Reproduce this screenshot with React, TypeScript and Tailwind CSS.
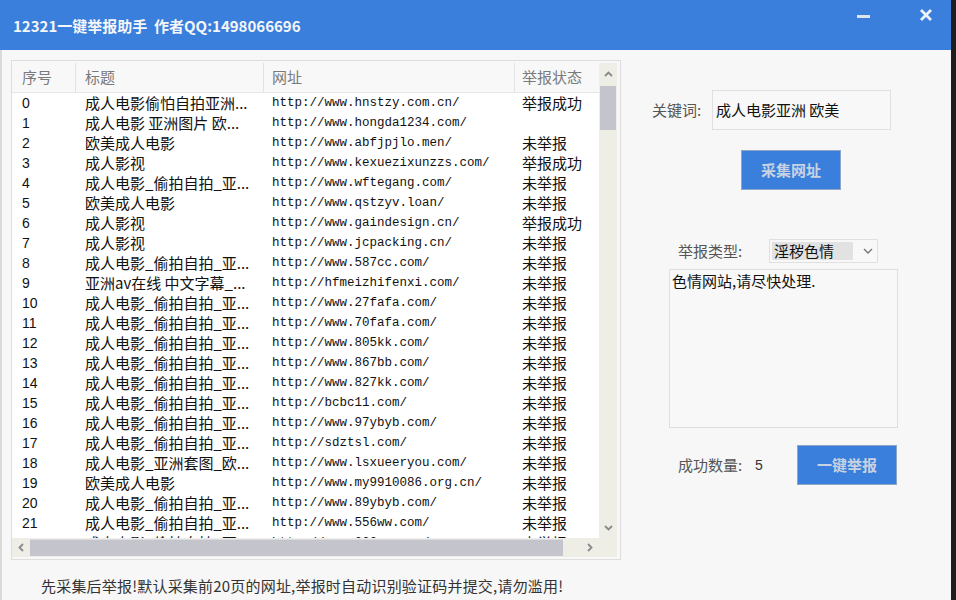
import React from "react";

const CJK = { fontFamily: '"Noto Sans CJK SC", "Noto Sans", sans-serif' };
const MONO = { fontFamily: '"Liberation Mono", "DejaVu Sans Mono", monospace' };
const SANS = { fontFamily: '"Liberation Sans", Arial, sans-serif' };

const rows: [string, string, string, string][] = [
  ["0", "成人电影偷怕自拍亚洲...", "http://www.hnstzy.com.cn/", "举报成功"],
  ["1", "成人电影 亚洲图片 欧...", "http://www.hongda1234.com/", ""],
  ["2", "欧美成人电影", "http://www.abfjpjlo.men/", "未举报"],
  ["3", "成人影视", "http://www.kexuezixunzzs.com/", "举报成功"],
  ["4", "成人电影_偷拍自拍_亚...", "http://www.wftegang.com/", "未举报"],
  ["5", "欧美成人电影", "http://www.qstzyv.loan/", "未举报"],
  ["6", "成人影视", "http://www.gaindesign.cn/", "举报成功"],
  ["7", "成人影视", "http://www.jcpacking.cn/", "未举报"],
  ["8", "成人电影_偷拍自拍_亚...", "http://www.587cc.com/", "未举报"],
  ["9", "亚洲av在线 中文字幕_...", "http://hfmeizhifenxi.com/", "未举报"],
  ["10", "成人电影_偷拍自拍_亚...", "http://www.27fafa.com/", "未举报"],
  ["11", "成人电影_偷拍自拍_亚...", "http://www.70fafa.com/", "未举报"],
  ["12", "成人电影_偷拍自拍_亚...", "http://www.805kk.com/", "未举报"],
  ["13", "成人电影_偷拍自拍_亚...", "http://www.867bb.com/", "未举报"],
  ["14", "成人电影_偷拍自拍_亚...", "http://www.827kk.com/", "未举报"],
  ["15", "成人电影_偷拍自拍_亚...", "http://bcbc11.com/", "未举报"],
  ["16", "成人电影_偷拍自拍_亚...", "http://www.97ybyb.com/", "未举报"],
  ["17", "成人电影_偷拍自拍_亚...", "http://sdztsl.com/", "未举报"],
  ["18", "成人电影_亚洲套图_欧...", "http://www.lsxueeryou.com/", "未举报"],
  ["19", "欧美成人电影", "http://www.my9910086.org.cn/", "未举报"],
  ["20", "成人电影_偷拍自拍_亚...", "http://www.89ybyb.com/", "未举报"],
  ["21", "成人电影_偷拍自拍_亚...", "http://www.556ww.com/", "未举报"],
  ["22", "成人电影_偷拍自拍_亚...", "http://www.666ww.com/", "未举报"],
];

function Chevron({ dir }: { dir: "up" | "down" | "left" | "right" }) {
  const d = {
    up: "M2 7 L5.5 3.5 L9 7",
    down: "M2 4 L5.5 7.5 L9 4",
    left: "M7 2 L3.5 5.5 L7 9",
    right: "M4 2 L7.5 5.5 L4 9",
  }[dir];
  return (
    <svg width="11" height="11" viewBox="0 0 11 11">
      <path d={d} fill="none" stroke="#8a8a8a" strokeWidth="1.8" />
    </svg>
  );
}

export default function App() {
  return (
    <div className="flex h-[600px] w-[956px] overflow-hidden bg-[#1e1e1e]">
      <div className="flex w-[951px] flex-col bg-[#f7f7f7]">
        {/* Title bar */}
        <div className="flex h-[50px] items-center bg-[#3a7fdb] pl-[13px]">
          <span
            className="text-[15px] font-bold leading-none text-[#f4f6fa]"
            style={CJK}
          >
            12321一键举报助手&nbsp;&nbsp;作者QQ:1498066696
          </span>
          <div className="ml-auto flex h-full items-start pt-[6px]">
            <div className="mr-[49px] mt-[9px] h-[3px] w-[13px] bg-[#dfe6f0]" />
            <svg width="14" height="14" viewBox="0 0 14 14" className="mr-[18px] mt-[2px]">
              <path d="M2 2 L12 12 M12 2 L2 12" stroke="#eef2f8" strokeWidth="2.8" />
            </svg>
          </div>
        </div>

        {/* Body */}
        <div className="flex flex-1 border-l-[2px] border-[#dadada]">
          {/* Left column */}
          <div className="flex flex-col pl-[9px] pt-[10px]">
            <div className="flex h-[500px] w-[610px] flex-col border border-[#dedede] bg-[#f8f8f8] pl-0 pr-[3px] pt-[2px]">
              <div className="flex h-[475px]">
                {/* table */}
                <div className="flex w-[587px] flex-col overflow-hidden bg-white">
                  <div
                    className="grid h-[30px] shrink-0 grid-cols-[64px_188px_251px_84px] border-b border-[#e6e6e6] bg-[#f8f8f8] text-[15px] text-[#7a7a7a]"
                    style={CJK}
                  >
                    <div className="flex items-center border-r border-[#e2e2e2] pl-[10px]">序号</div>
                    <div className="flex items-center border-r border-[#e2e2e2] pl-[9px]">标题</div>
                    <div className="flex items-center border-r border-[#e2e2e2] pl-[8px]">网址</div>
                    <div className="flex items-center pl-[7px]">举报状态</div>
                  </div>
                  <div className="flex-1 overflow-hidden">
                    {rows.map((r) => (
                      <div
                        key={r[0]}
                        className="grid h-[20px] grid-cols-[64px_188px_251px_84px] items-center text-[#111]"
                      >
                        <div className="pl-[10px] text-[14px] leading-[20px]" style={SANS}>
                          {r[0]}
                        </div>
                        <div
                          className="overflow-hidden whitespace-nowrap pl-[9px] text-[15px] leading-[20px]"
                          style={CJK}
                        >
                          {r[1]}
                        </div>
                        <div
                          className="overflow-hidden whitespace-nowrap pl-[8px] text-[12.5px] leading-[20px]"
                          style={MONO}
                        >
                          {r[2]}
                        </div>
                        <div
                          className="whitespace-nowrap pl-[7px] text-[15px] leading-[20px]"
                          style={CJK}
                        >
                          {r[3]}
                        </div>
                      </div>
                    ))}
                  </div>
                </div>
                {/* vertical scrollbar */}
                <div className="flex w-[18px] flex-col bg-[#eeeee6]">
                  <div className="flex h-[23px] items-center justify-center">
                    <Chevron dir="up" />
                  </div>
                  <div className="mx-[1px] h-[44px] bg-[#c4c4cc]" />
                  <div className="flex-1" />
                  <div className="flex h-[22px] items-center justify-center">
                    <Chevron dir="down" />
                  </div>
                </div>
              </div>
              {/* horizontal scrollbar */}
              <div className="flex h-[19px]">
                <div className="flex w-[587px] items-stretch bg-[#eeeee6]">
                  <div className="flex w-[18px] items-center justify-center">
                    <Chevron dir="left" />
                  </div>
                  <div className="my-[1px] w-[533px] border-t border-[#dcdce2] bg-[#c4c4cc]" />
                  <div className="flex-1" />
                  <div className="flex w-[19px] items-center justify-center">
                    <Chevron dir="right" />
                  </div>
                </div>
                <div className="w-[18px] bg-[#eeeee6]" />
              </div>
            </div>
            <div
              className="ml-[30px] mt-[16px] text-[15px] leading-[20px] tracking-[0.2px] text-[#333]"
              style={CJK}
            >
              先采集后举报!默认采集前20页的网址,举报时自动识别验证码并提交,请勿滥用!
            </div>
          </div>

          {/* Right column */}
          <div className="flex flex-col" style={CJK}>
            <div className="ml-[31px] mt-[40px] flex items-center">
              <span className="w-[60px] text-[15px] text-[#555]">关键词:</span>
              <div className="flex h-[40px] w-[179px] items-center border border-[#e0e0e0] bg-[#f8f8f8] pl-[3px] text-[15px] text-[#111]">
                成人电影亚洲 欧美
              </div>
            </div>
            <div className="ml-[120px] mt-[20px] flex h-[40px] w-[100px] items-center justify-center border border-[#8ea6c8] bg-[#3a7fdb] text-[15px] font-bold text-[#c8d2e2]">
              采集网址
            </div>
            <div className="ml-[57px] mt-[49px] flex items-center">
              <span className="w-[91px] text-[15px] text-[#555]">举报类型:</span>
              <div className="flex h-[24px] w-[109px] items-center border border-[#e0e0e0] bg-[#f8f8f8] px-[2px]">
                <div className="flex h-[18px] w-[81px] items-center bg-[#e2e2e2] pl-[2px] text-[15px] text-[#111]">
                  淫秽色情
                </div>
                <svg width="12" height="12" viewBox="0 0 12 12" className="ml-[9px]">
                  <path d="M2 4 L6 8 L10 4" fill="none" stroke="#777" strokeWidth="1.4" />
                </svg>
              </div>
            </div>
            <div className="ml-[48px] mt-[6px] h-[159px] w-[229px] border border-[#dedede] bg-[#f8f8f8] pl-[2px] pt-[1px] text-[15px] leading-[20px] text-[#111]">
              色情网站,请尽快处理.
            </div>
            <div className="ml-[57px] mt-[17px] flex items-center">
              <span className="w-[77px] text-[15px] text-[#555]">成功数量:</span>
              <span className="w-[42px] text-[14px] text-[#333]" style={SANS}>
                5
              </span>
              <div className="flex h-[40px] w-[100px] items-center justify-center border border-[#8ea6c8] bg-[#3a7fdb] text-[15px] font-bold text-[#c8d2e2]">
                一键举报
              </div>
            </div>
          </div>
        </div>
      </div>
      <div className="flex-1" />
    </div>
  );
}
